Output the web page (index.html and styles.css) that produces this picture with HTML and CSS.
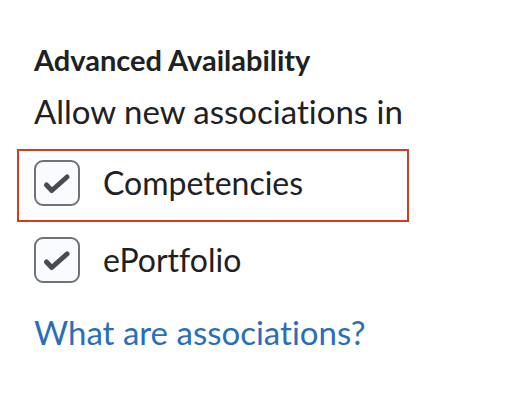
FILE: index.html
```html
<!DOCTYPE html>
<html lang="en">
<head>
<meta charset="utf-8">
<title>Advanced Availability</title>
<link rel="stylesheet" href="styles.css">
</head>
<body>
<section class="panel">
  <h2 class="heading">Advanced Availability</h2>
  <p class="intro">Allow new associations in</p>
  <div class="highlight">
    <label class="option">
      <span class="checkbox"><svg viewBox="2 2 42 42" width="42" height="42"><path d="M12.5 25 L17.8 30.5 L33 17" fill="none" stroke="#494c4e" stroke-width="5" stroke-linecap="round" stroke-linejoin="round"/></svg></span>
      <span class="option-text">Competencies</span>
    </label>
  </div>
  <label class="option option-plain">
    <span class="checkbox"><svg viewBox="2 2 42 42" width="42" height="42"><path d="M12.5 25 L17.8 30.5 L33 17" fill="none" stroke="#494c4e" stroke-width="5" stroke-linecap="round" stroke-linejoin="round"/></svg></span>
    <span class="option-text">ePortfolio</span>
  </label>
  <a class="help-link" href="#">What are associations?</a>
</section>
</body>
</html>
```
FILE: styles.css
```css
html, body {
  margin: 0;
  padding: 0;
  background: #ffffff;
}
body {
  font-family: Lato, "Noto Sans", sans-serif;
  color: #202122;
  font-variant-ligatures: none;
}
.panel {
  padding: 44px 0 0 34px;
  display: flex;
  flex-direction: column;
  align-items: flex-start;
}
.heading {
  margin: 0;
  font-size: 29px;
  line-height: 32px;
  font-weight: 700;
}
.intro {
  margin: 15px 0 0 0;
  font-size: 33px;
  line-height: 40px;
  font-weight: 400;
}
.highlight {
  margin: 18px 0 0 -17px;
  border: 2px solid #d23c22;
  width: 373px;
  padding: 9px 0 14px 15px;
}
.option {
  display: flex;
  align-items: center;
  gap: 23px;
}
.option-plain {
  margin-top: 15px;
}
.checkbox {
  box-sizing: border-box;
  width: 46px;
  height: 46px;
  border: 2px solid #6e7377;
  border-radius: 9px;
  background: #f9fbff;
  flex: none;
}
.checkbox svg {
  display: block;
}
.option-text {
  font-size: 32px;
  line-height: 46px;
}
.help-link {
  margin-top: 29px;
  font-size: 33px;
  line-height: 40px;
  color: #2a6ebb;
  text-decoration: none;
}
```
